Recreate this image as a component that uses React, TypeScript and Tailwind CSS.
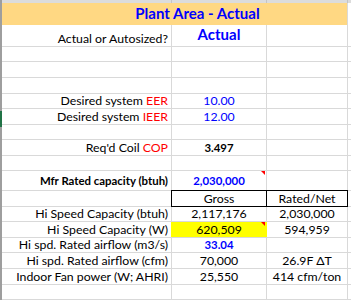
import React from "react";

const A = "w-[170px] shrink-0 border-r border-[#d9d9d9] flex items-end justify-end pr-[3px]";
const B = "w-[95px] shrink-0 border-r border-[#d9d9d9] flex items-end justify-center relative";
const C = "w-[81px] shrink-0 border-r border-[#d9d9d9] flex items-end justify-center";
const D = "flex-1";

function Tri() {
  return (
    <div className="absolute top-0 right-[1px] w-0 h-0 border-t-[4px] border-t-[#ff0000] border-l-[4px] border-l-transparent" />
  );
}

function Row({
  h,
  a,
  b,
  c,
  aCls = "",
  bCls = "",
  cCls = "",
  tri = false,
}: {
  h: string;
  a?: React.ReactNode;
  b?: React.ReactNode;
  c?: React.ReactNode;
  aCls?: string;
  bCls?: string;
  cCls?: string;
  tri?: boolean;
}) {
  return (
    <div className={`flex border-b border-[#d9d9d9] ${h}`}>
      <div className={`${A} ${aCls}`}>{a}</div>
      <div className={`${B} ${bCls}`}>
        {tri && <Tri />}
        {b}
      </div>
      <div className={`${C} ${cCls}`}>{c}</div>
      <div className={D} />
    </div>
  );
}

export default function App() {
  const t = "leading-[13px] pb-[1px]";
  const tb = "leading-[13px] pb-[1px] font-bold text-[11.4px]";
  return (
    <div className="w-[351px] h-[300px] overflow-hidden bg-white flex text-[12.3px] text-black [font-family:Lato,sans-serif]">
      <div className="w-[2px] shrink-0 flex flex-col">
        <div className="h-[111px] bg-[#9e9e9e]" />
        <div className="h-[16px] bg-[#217346]" />
        <div className="flex-1 bg-[#9e9e9e]" />
      </div>
      <div className="flex-1 flex flex-col">
        {/* top band */}
        <div className="flex h-[3px] bg-[#dcdcdc]">
          <div className="w-[170px] shrink-0 border-r border-[#c4c4c4]" />
          <div className="w-[95px] shrink-0 border-r border-[#c4c4c4]" />
          <div className="w-[81px] shrink-0 border-r border-[#c4c4c4]" />
          <div className="flex-1" />
        </div>
        {/* header */}
        <div className="flex h-[23px]">
          <div className="w-[346px] shrink-0 bg-[#ffd883] border-r border-[#d9d9d9] flex items-end justify-center pl-[46px]">
            <span className="text-[15px] font-bold text-[#0000ff] leading-[15px] pb-[4px]">Plant Area - Actual</span>
          </div>
          <div className="flex-1" />
        </div>
        <Row
          h="h-[22px]"
          a={<span className={t}>Actual or Autosized?</span>}
          b={<span className="text-[15px] font-bold text-[#0000ff] leading-[15px] pb-[4px]">Actual</span>}
        />
        <Row h="h-[16px]" />
        <Row h="h-[16px]" />
        <Row h="h-[16px]" />
        <Row
          h="h-[16px]"
          a={<span className={t}>Desired system <span className="text-[#ff0000]">EER</span></span>}
          b={<span className={`${t} text-[#0000ff]`}>10.00</span>}
        />
        <Row
          h="h-[16px]"
          a={<span className={t}>Desired system <span className="text-[#ff0000]">IEER</span></span>}
          b={<span className={`${t} text-[#0000ff]`}>12.00</span>}
        />
        <Row h="h-[16px]" />
        <Row
          h="h-[16px]"
          a={<span className={t}>Req'd Coil <span className="text-[#ff0000]">COP</span></span>}
          b={<span className={tb}>3.497</span>}
        />
        <Row h="h-[16px]" />
        <Row
          h="h-[20px]"
          a={<span className={`${tb} pb-[3px]`}>Mfr Rated capacity (btuh)</span>}
          b={<span className={`${tb} text-[#0000ff] pb-[3px]`}>2,030,000</span>}
          tri
        />
        {/* Gross / Rated-Net box */}
        <div className="flex h-[16px] border-b border-[#d9d9d9] relative">
          <div className={A} />
          <div className="w-[95px] shrink-0 border-r border-black flex items-end justify-center">
            <span className={t}>Gross</span>
          </div>
          <div className="w-[81px] shrink-0 border-r border-black flex items-end justify-center">
            <span className={t}>Rated/Net</span>
          </div>
          <div className={D} />
          <div className="absolute left-[169px] top-[-1px] w-[177px] h-[17px] border border-black pointer-events-none" />
        </div>
        <Row
          h="h-[16px]"
          a={<span className={t}>Hi Speed Capacity (btuh)</span>}
          b={<span className={t}>2,117,176</span>}
          c={<span className={t}>2,030,000</span>}
        />
        <Row
          h="h-[16px]"
          aCls="!border-[#ffff00]"
          bCls="bg-[#ffff00] !border-[#ffff00]"
          a={<span className={t}>Hi Speed Capacity (W)</span>}
          b={<span className={t}>620,509</span>}
          c={<span className={t}>594,959</span>}
          tri
        />
        <Row
          h="h-[16px]"
          a={<span className={t}>Hi spd. Rated airflow (m3/s)</span>}
          b={<span className={`${tb} text-[#0000ff]`}>33.04</span>}
        />
        <Row
          h="h-[16px]"
          a={<span className={t}>Hi spd. Rated airflow (cfm)</span>}
          b={<span className={t}>70,000</span>}
          c={<span className={t}>26.9F ΔT</span>}
        />
        <Row
          h="h-[16px]"
          a={<span className={t}>Indoor Fan power (W; AHRI)</span>}
          b={<span className={t}>25,550</span>}
          c={<span className={t}>414 cfm/ton</span>}
        />
        <Row h="h-[16px]" />
      </div>
    </div>
  );
}
